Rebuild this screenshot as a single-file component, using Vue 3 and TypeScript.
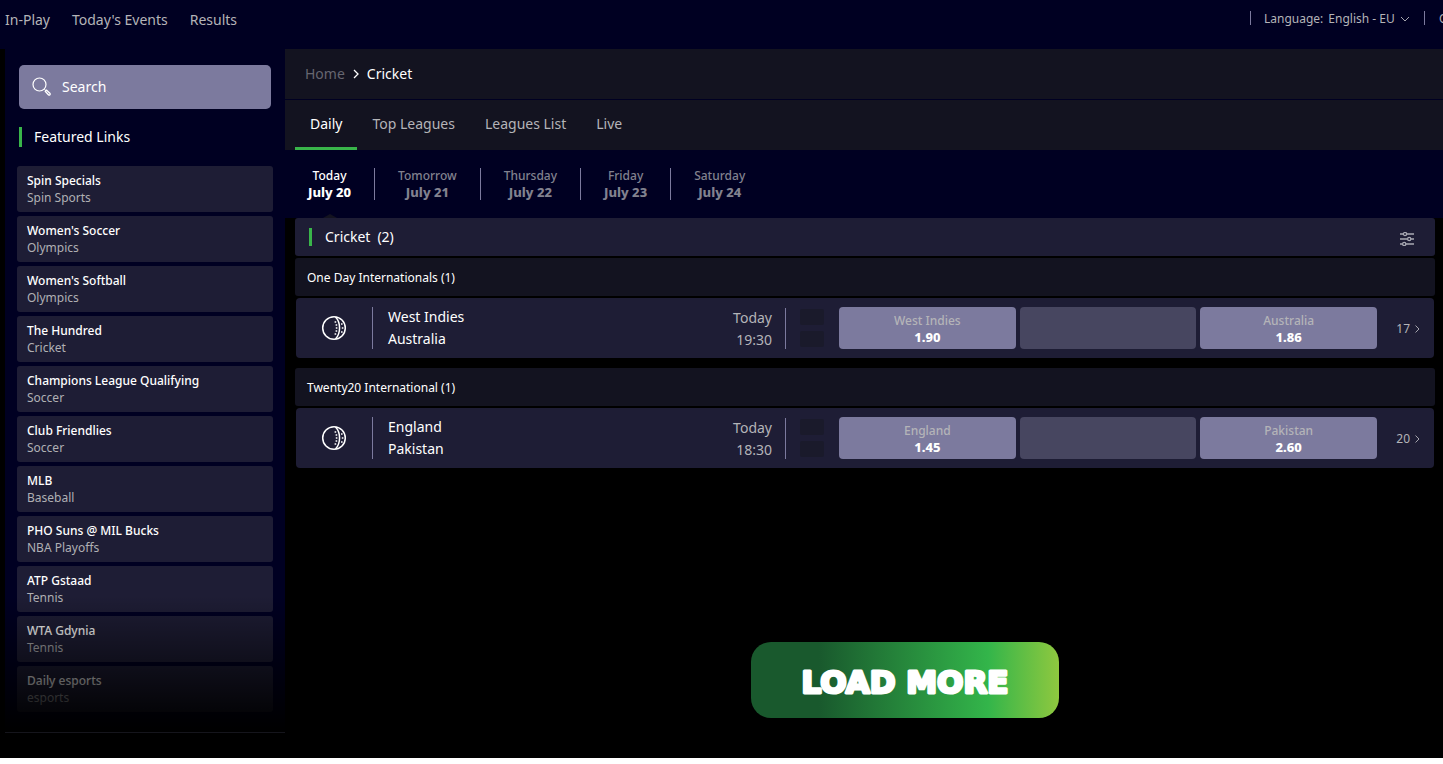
<script setup lang="ts">
interface FeaturedLink { title: string; sub: string }
interface Match { home: string; away: string; time: string; homeOdds: string; awayOdds: string; markets: number }
interface League { name: string; matches: Match[] }

const navItems: string[] = ['In-Play', "Today's Events", 'Results']
const tabs: string[] = ['Daily', 'Top Leagues', 'Leagues List', 'Live']
const days: { name: string; date: string }[] = [
  { name: 'Today', date: 'July 20' },
  { name: 'Tomorrow', date: 'July 21' },
  { name: 'Thursday', date: 'July 22' },
  { name: 'Friday', date: 'July 23' },
  { name: 'Saturday', date: 'July 24' },
]
const featured: FeaturedLink[] = [
  { title: 'Spin Specials', sub: 'Spin Sports' },
  { title: "Women's Soccer", sub: 'Olympics' },
  { title: "Women's Softball", sub: 'Olympics' },
  { title: 'The Hundred', sub: 'Cricket' },
  { title: 'Champions League Qualifying', sub: 'Soccer' },
  { title: 'Club Friendlies', sub: 'Soccer' },
  { title: 'MLB', sub: 'Baseball' },
  { title: 'PHO Suns @ MIL Bucks', sub: 'NBA Playoffs' },
  { title: 'ATP Gstaad', sub: 'Tennis' },
  { title: 'WTA Gdynia', sub: 'Tennis' },
  { title: 'Daily esports', sub: 'esports' },
]
const leagues: League[] = [
  {
    name: 'One Day Internationals',
    matches: [{ home: 'West Indies', away: 'Australia', time: '19:30', homeOdds: '1.90', awayOdds: '1.86', markets: 17 }],
  },
  {
    name: 'Twenty20 International',
    matches: [{ home: 'England', away: 'Pakistan', time: '18:30', homeOdds: '1.45', awayOdds: '2.60', markets: 20 }],
  },
]
</script>

<template>
  <div class="page">
    <header class="topbar">
      <nav class="nav">
        <a v-for="item in navItems" :key="item" href="#">{{ item }}</a>
      </nav>
      <div class="prefs">
        <div class="pref language">
          <label for="language">Language:</label>
          <select id="language">
            <option>English - EU</option>
          </select>
          <svg width="10" height="6" viewBox="0 0 10 6"><path d="M1 1l4 4 4-4" fill="none" stroke="#a5a5ad" /></svg>
        </div>
        <div class="pref odds-pref"><span>O</span></div>
      </div>
    </header>

    <div class="body">
      <aside class="sidebar">
        <div class="search">
          <svg width="20" height="20" viewBox="0 0 20 20" fill="none" stroke="#fff">
            <circle cx="7.5" cy="7.5" r="6.5" stroke-width="1.2" />
            <path d="M12.2 12l1.5 1.4" />
            <path d="M13.2 14.2l1.2-1.1 3.7 3.4a1.1 1.1 0 0 1-1.5 1.5z" stroke-width="1.3" stroke-linejoin="round" />
          </svg>
          <input type="text" placeholder="Search" aria-label="Search" />
        </div>
        <h2 class="featured-title">Featured Links</h2>
        <ul class="links">
          <li v-for="link in featured" :key="link.title">
            <a href="#"><strong>{{ link.title }}</strong><span>{{ link.sub }}</span></a>
          </li>
        </ul>
      </aside>

      <main class="main">
        <nav class="crumbs">
          <a href="#">Home</a>
          <svg width="6" height="10" viewBox="0 0 6 10"><path d="M1 1l4 4-4 4" fill="none" stroke="#fff" stroke-width="1.3" /></svg>
          <span>Cricket</span>
        </nav>
        <div class="tabs">
          <button v-for="(tab, i) in tabs" :key="tab" type="button" :class="{ active: i === 0 }">{{ tab }}</button>
        </div>
        <div class="days">
          <button v-for="(day, i) in days" :key="day.name" type="button" :class="{ active: i === 0 }">
            <span>{{ day.name }}</span><b>{{ day.date }}</b>
          </button>
        </div>

        <section class="events">
          <div class="sport">
            <h1>Cricket<span>(2)</span></h1>
            <button type="button" class="filter" aria-label="Filter">
              <svg width="14" height="14" viewBox="0 0 14 14" fill="none" stroke="#a9a9b3" stroke-width="1.3">
                <path d="M0 2h3.2M6.8 2H14M0 7h7.4M11 7h3M0 12h2.4M6 12h8" />
                <circle cx="5" cy="2" r="1.6" /><circle cx="9.2" cy="7" r="1.6" /><circle cx="4.2" cy="12" r="1.6" />
              </svg>
            </button>
          </div>
          <div v-for="league in leagues" :key="league.name" class="league">
            <h3>{{ league.name }} ({{ league.matches.length }})</h3>
            <article v-for="match in league.matches" :key="match.home" class="match">
              <div class="ball">
                <svg width="26" height="26" viewBox="0 0 26 26" fill="none" stroke="#fff" stroke-width="1.5">
                  <circle cx="13" cy="13" r="11.3" />
                  <path d="M14.5 2c5.4 5.5 5.4 16.5 0 22" />
                  <path d="M13.6 7h1.6M14.6 10h1.6M14.8 13h1.6M14.6 16h1.6M13.6 19h1.6M20 9h1.6M20.8 13h1.6M20 17h1.6" />
                </svg>
              </div>
              <div class="info">
                <div class="teams"><span>{{ match.home }}</span><span>{{ match.away }}</span></div>
                <div class="when"><span>Today</span><span>{{ match.time }}</span></div>
              </div>
              <div class="badges"><i></i><i></i></div>
              <div class="odds">
                <button type="button"><span>{{ match.home }}</span><b>{{ match.homeOdds }}</b></button>
                <button type="button" disabled aria-label="Draw"></button>
                <button type="button"><span>{{ match.away }}</span><b>{{ match.awayOdds }}</b></button>
              </div>
              <a href="#" class="more">
                {{ match.markets }}
                <svg width="5" height="8" viewBox="0 0 5 8"><path d="M.5 .5L4 4 .5 7.5" fill="none" stroke="#a5a5ad" /></svg>
              </a>
            </article>
          </div>
        </section>

        <div class="load">
          <button type="button">
            <svg width="308" height="76" viewBox="0 0 308 76">
              <text x="154" y="51" text-anchor="middle">LOAD MORE</text>
            </svg>
          </button>
        </div>
      </main>
    </div>
  </div>
</template>

<style>
body { background: #fff; }
</style>

<style scoped>
.page {
  background: #000;
  color: #fff;
  font-family: "Noto Sans", Tahoma, sans-serif;
  font-size: 14px;
  line-height: 20px;
  overflow: hidden;
}
.page * { box-sizing: border-box; }
a { color: inherit; text-decoration: none; }
button, select, input {
  font: inherit;
  color: inherit;
  background: none;
  border: 0;
  padding: 0;
  margin: 0;
  appearance: none;
}
button { cursor: pointer; }
h1, h2, h3, ul { margin: 0; padding: 0; font-weight: 400; list-style: none; }
svg { flex: none; display: block; }

.topbar {
  display: flex;
  justify-content: space-between;
  height: 49px;
  background: #000022;
  color: #b4b4b8;
}
.nav { display: flex; gap: 22px; padding: 10px 5px; }
.prefs { display: flex; padding-top: 11px; font-size: 12px; line-height: 14px; height: 25px; }
.pref { display: flex; align-items: center; border-left: 1px solid #7c7a9e; padding-left: 13px; }
.pref label, .pref select, .pref span { padding-top: 2px; }
.language { width: 174px; }
.language select { margin-left: 5px; flex: 1; min-width: 0; }
.language svg { margin: 2px 14px 0 0; }
.odds-pref { width: 19px; overflow: hidden; padding-left: 14px; }

.body { display: flex; align-items: flex-start; padding: 0 0 25px 5px; }
.sidebar {
  position: relative;
  flex: none;
  width: 280px;
  padding: 16px 12px 20px;
  background: #000022;
  border-bottom: 1px solid #15151c;
}
.sidebar::after {
  content: "";
  position: absolute;
  inset: auto 0 0;
  height: 136px;
  background: linear-gradient(rgba(0, 0, 0, 0), #000);
  pointer-events: none;
}
.search {
  display: flex;
  align-items: center;
  height: 44px;
  margin: 0 2px;
  padding: 0 13px;
  gap: 10px;
  background: #7c7a9e;
  border-radius: 5px;
}
.search input { flex: 1; min-width: 0; outline: 0; }
.search input::placeholder { color: #fff; opacity: 1; }
.featured-title {
  margin: 18px 2px 19px;
  padding-left: 12px;
  border-left: 3px solid #39b54a;
  font-size: 14px;
  line-height: 20px;
}
.links { display: grid; gap: 4px; }
.links a {
  display: flex;
  flex-direction: column;
  height: 46px;
  padding: 6px 10px;
  background: #1e1d35;
  border-radius: 3px;
  font-size: 12px;
  line-height: 17px;
}
.links strong { font-weight: 500; }
.links span { color: #b0b0b4; }

.main { flex: 1; min-width: 0; }
.crumbs {
  display: flex;
  align-items: center;
  gap: 8px;
  height: 51px;
  padding: 0 20px;
  background: #131320;
  border-bottom: 1px solid #000022;
}
.crumbs a { color: #666670; }
.tabs { display: flex; height: 50px; padding: 0 10px; background: #131320; color: #b4b4b8; }
.tabs button { padding: 0 15px; border-bottom: 3px solid transparent; border-top: 1px solid transparent; }
.tabs .active { color: #fff; border-bottom-color: #39b54a; }
.days {
  display: flex;
  height: 68px;
  padding: 18px 0;
  background: #000022;
  color: #82828f;
  font-size: 12px;
  line-height: 17px;
}
.days button {
  position: relative;
  display: flex;
  flex-direction: column;
  align-items: center;
  justify-content: center;
  padding: 0 23px;
}
.days span { font-weight: 500; }
.days b, .odds b { font-size: 13px; font-weight: 800; }
.days button + button { border-left: 1px solid #7c7a9e; }
.days .active { color: #fff; }
.days .active::after {
  content: "";
  position: absolute;
  left: 50%;
  bottom: -18px;
  margin-left: -7px;
  border: 7px solid transparent;
  border-top: 0;
  border-bottom: 4px solid #131320;
}

.events { padding: 0 8px 0 10px; }
.sport {
  display: flex;
  align-items: center;
  justify-content: space-between;
  height: 38px;
  padding: 0 21px 0 14px;
  background: #1e1d35;
  border-radius: 3px;
}
.sport h1 {
  display: flex;
  gap: 7px;
  font-size: 14px;
  line-height: 18px;
  padding-left: 13px;
  border-left: 3px solid #39b54a;
}
.filter { padding-top: 4px; }
.league { padding-top: 2px; }
.league + .league { padding-top: 10px; }
.league h3 {
  height: 38px;
  padding: 0 12px;
  background: #131320;
  border-radius: 3px;
  font-size: 12px;
  line-height: 39px;
}
.match {
  display: flex;
  align-items: center;
  height: 60px;
  margin: 2px 1px 0;
  background: #1e1d35;
  border-radius: 4px;
}
.ball { flex: none; width: 76px; display: flex; justify-content: center; }
.info {
  flex: 384 1 0;
  min-width: 0;
  display: flex;
  justify-content: space-between;
  height: 42px;
  align-items: center;
  padding: 0 13px 0 15px;
  border-left: 1px solid #7c7a9e;
  line-height: 22px;
}
.info span { display: block; }
.when { color: #b4b4b8; text-align: right; padding-top: 2px; }
.badges {
  flex: none;
  display: grid;
  align-content: center;
  gap: 6px;
  height: 41px;
  padding: 0 15px 0 14px;
  border-left: 1px solid #7c7a9e;
}
.badges i { width: 24px; height: 16px; background: #1a1a2b; border-radius: 2px; }
.odds { flex: 538 1 0; min-width: 0; display: grid; grid-template-columns: repeat(3, 1fr); gap: 4px; }
.odds button {
  height: 42px;
  padding-top: 1px;
  background: #7c7a9e;
  border-radius: 4px;
  font-size: 12px;
  line-height: 16px;
}
.odds button:disabled { background: #474660; }
.odds span, .odds b { display: block; }
.odds span { color: #b4b4b8; font-weight: 500; }
.more {
  flex: none;
  width: 57px;
  display: flex;
  align-items: center;
  justify-content: flex-end;
  gap: 5px;
  padding: 2px 14px 0 0;
  font-size: 12px;
  color: #b4b4b8;
}

.load { display: flex; justify-content: center; padding: 174px 0 0 82px; }
.load button {
  border-radius: 20px;
  background: linear-gradient(90deg, #19592d 0%, #19592d 22%, #33b54a 77%, #8fc83f 100%);
}
.load text {
  font-family: "DejaVu Sans", sans-serif;
  font-weight: 700;
  font-size: 31px;
  fill: #fff;
  stroke: #fff;
  stroke-width: 3px;
  stroke-linejoin: round;
}
</style>
